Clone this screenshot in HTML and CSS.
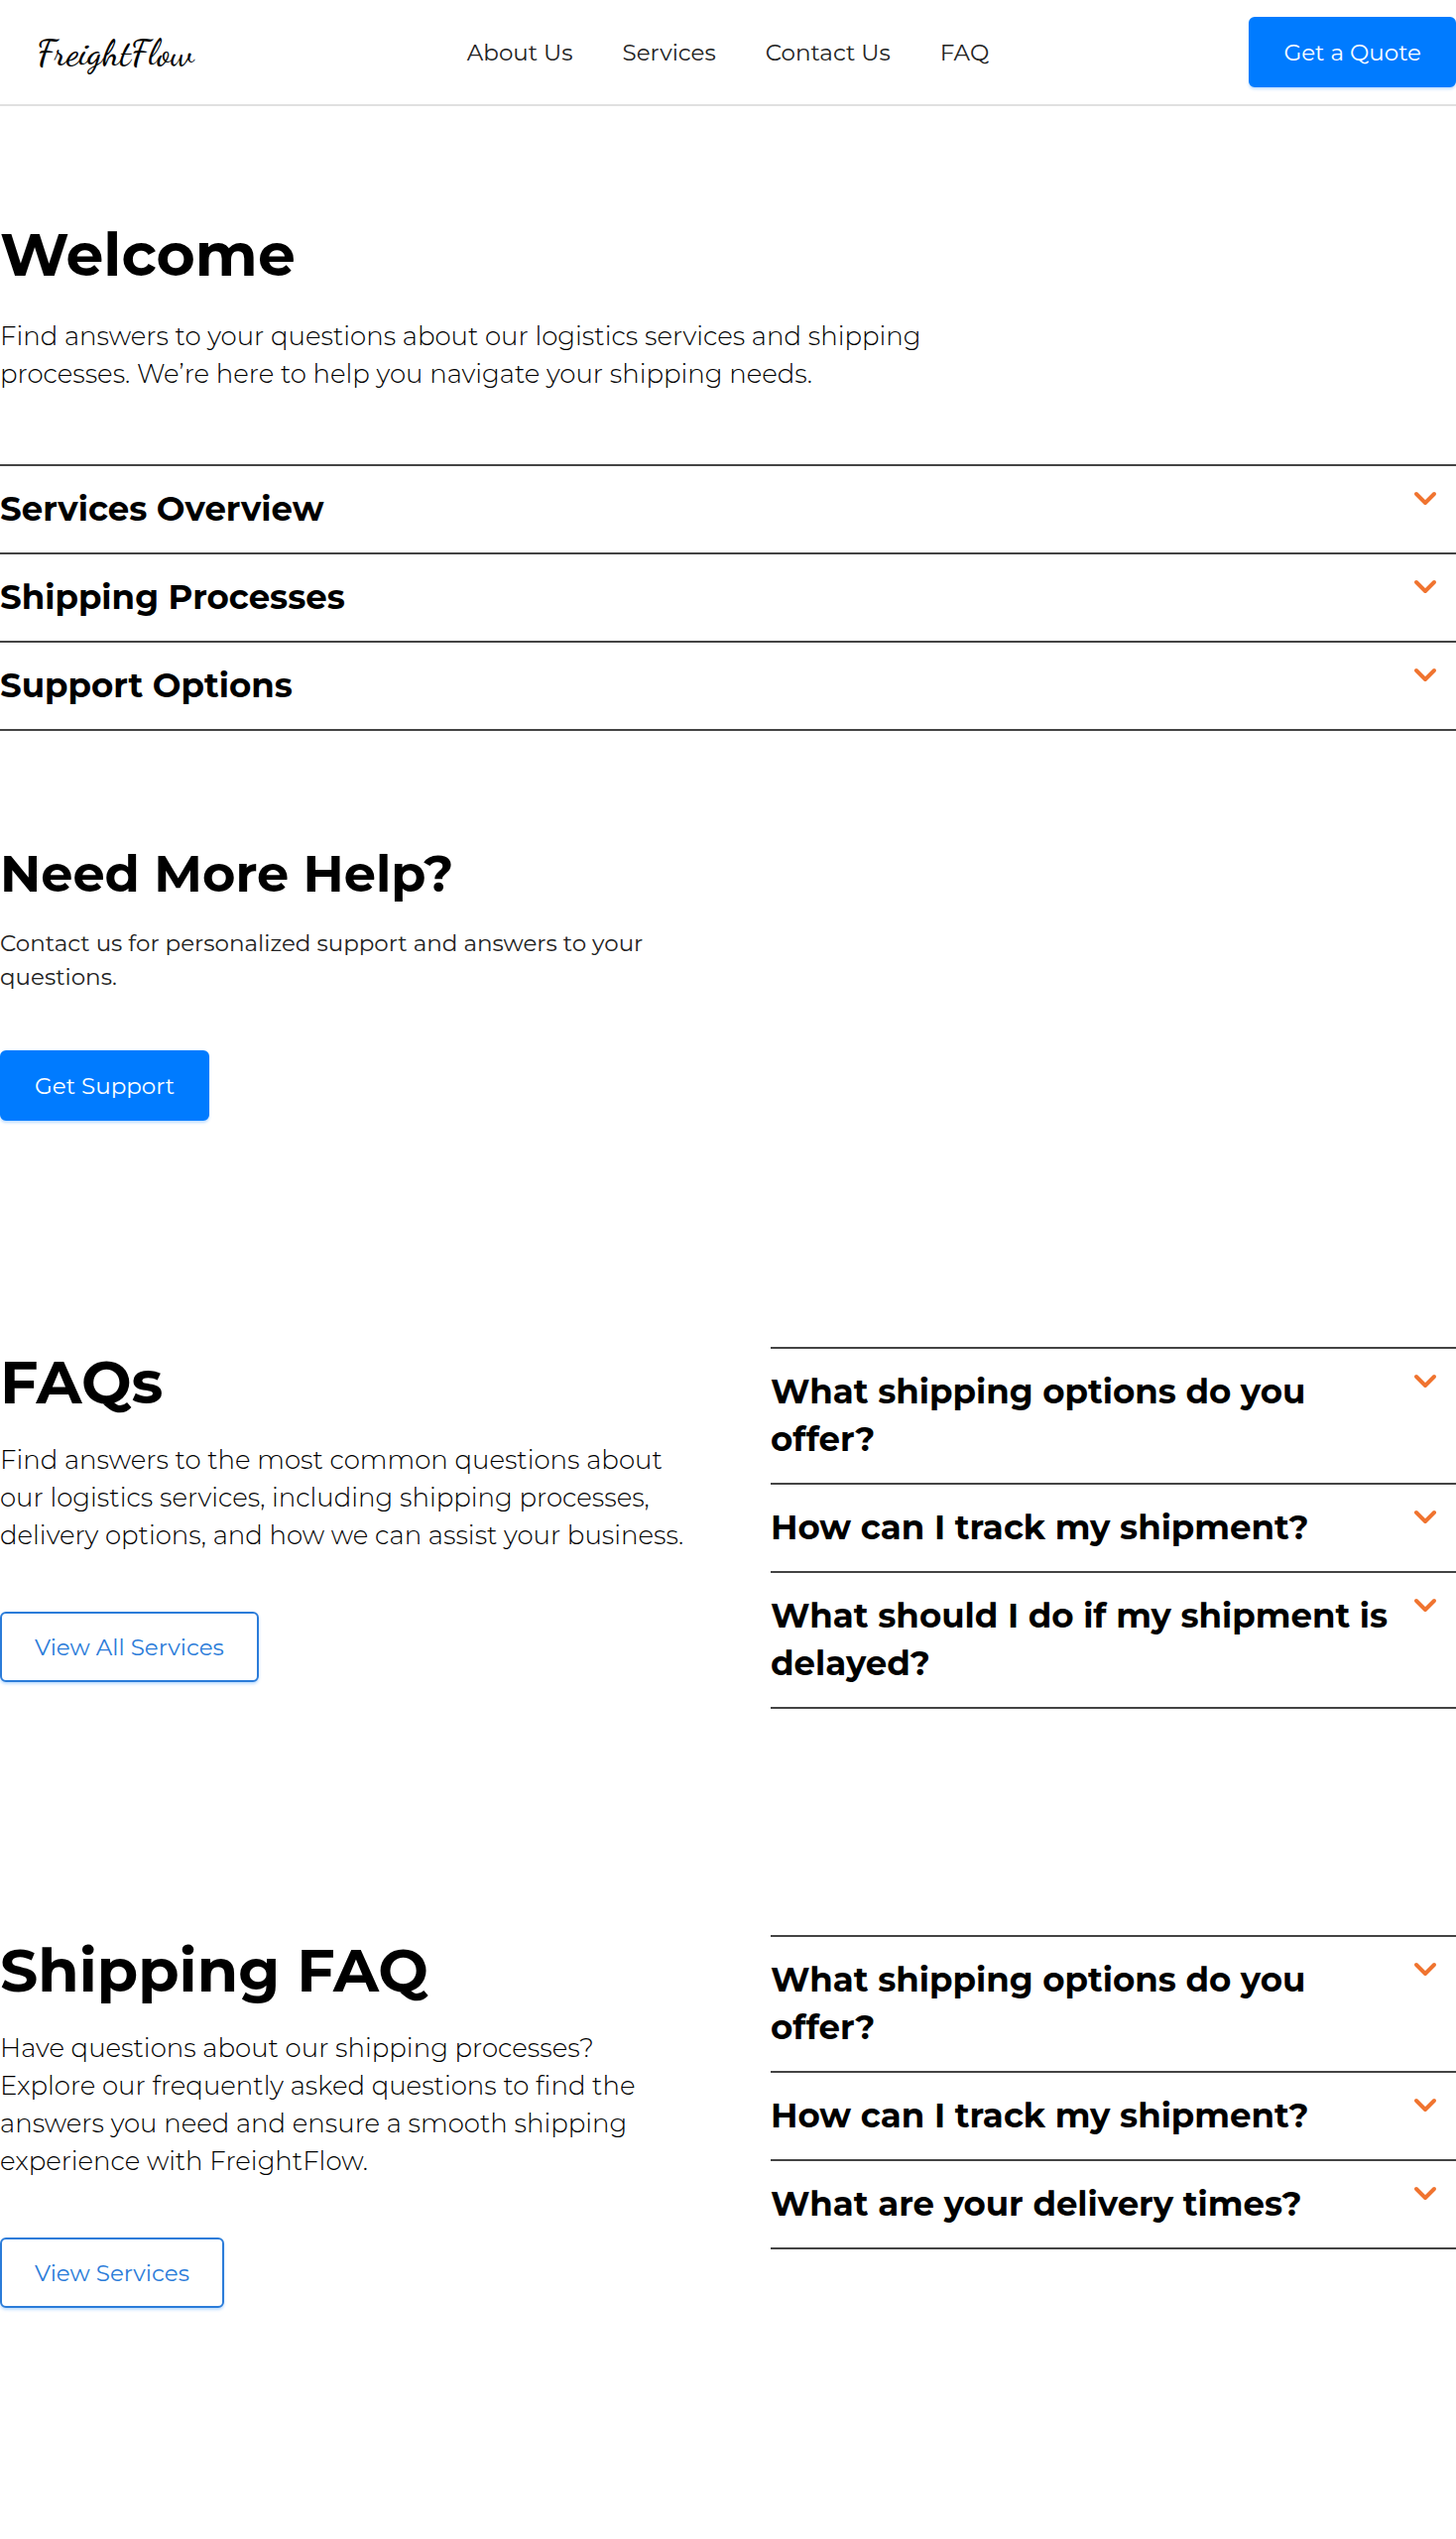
FILE: index.html
```html
<!DOCTYPE html>
<html lang="en">
<head>
    <meta charset="UTF-8">
    <meta name="viewport" content="width=device-width, initial-scale=1.0">
    <title>FreightFlow - FAQ</title>
    <link rel="stylesheet" href="styles.css">
</head>
<body>

<!-- Shared chevron for the accordions -->
<svg class="sprite" width="0" height="0" aria-hidden="true">
    <symbol id="chevron" viewBox="0 0 24 16">
        <path d="M3 3l9 9 9-9" fill="none" stroke="currentColor" stroke-width="4" stroke-linecap="round" stroke-linejoin="round"/>
    </symbol>
</svg>

<header class="navbar">
    <a class="logo" href="#">FreightFlow</a>
    <nav class="nav-links">
        <a href="#about">About Us</a>
        <a href="#services">Services</a>
        <a href="#contact">Contact Us</a>
        <a href="#faq">FAQ</a>
    </nav>
    <div class="nav-action">
        <button class="button" type="button">Get a Quote</button>
    </div>
</header>

<main>
    <section class="section section-first" id="services">
        <h1>Welcome</h1>
        <p class="lead intro">Find answers to your questions about our logistics services and shipping processes. We’re here to help you navigate your shipping needs.</p>
        <div class="accordion">
            <details>
                <summary><span>Services Overview</span><svg class="chevron"><use href="#chevron"/></svg></summary>
            </details>
            <details>
                <summary><span>Shipping Processes</span><svg class="chevron"><use href="#chevron"/></svg></summary>
            </details>
            <details>
                <summary><span>Support Options</span><svg class="chevron"><use href="#chevron"/></svg></summary>
            </details>
        </div>
    </section>

    <section class="section" id="contact">
        <h2 class="help-title">Need More Help?</h2>
        <p class="help-text">Contact us for personalized support and answers to your questions.</p>
        <button class="button" type="button">Get Support</button>
    </section>

    <section class="section columns" id="faq">
        <div class="column">
            <h2>FAQs</h2>
            <p class="lead">Find answers to the most common questions about our logistics services, including shipping processes, delivery options, and how we can assist your business.</p>
            <button class="button button-outline" type="button">View All Services</button>
        </div>
        <div class="column accordion">
            <details>
                <summary><span>What shipping options do you offer?</span><svg class="chevron"><use href="#chevron"/></svg></summary>
            </details>
            <details>
                <summary><span>How can I track my shipment?</span><svg class="chevron"><use href="#chevron"/></svg></summary>
            </details>
            <details>
                <summary><span>What should I do if my shipment is delayed?</span><svg class="chevron"><use href="#chevron"/></svg></summary>
            </details>
        </div>
    </section>

    <section class="section columns">
        <div class="column">
            <h2>Shipping FAQ</h2>
            <p class="lead">Have questions about our shipping processes? Explore our frequently asked questions to find the answers you need and ensure a smooth shipping experience with FreightFlow.</p>
            <button class="button button-outline" type="button">View Services</button>
        </div>
        <div class="column accordion">
            <details>
                <summary><span>What shipping options do you offer?</span><svg class="chevron"><use href="#chevron"/></svg></summary>
            </details>
            <details>
                <summary><span>How can I track my shipment?</span><svg class="chevron"><use href="#chevron"/></svg></summary>
            </details>
            <details>
                <summary><span>What are your delivery times?</span><svg class="chevron"><use href="#chevron"/></svg></summary>
            </details>
        </div>
    </section>
</main>

</body>
</html>
```

FILE: styles.css
```css
* { box-sizing: border-box; }
body {
    margin: 0;
    background-color: #fff;
    color: #000;
    font-family: Montserrat, Inter, sans-serif;
    font-size: 23px;
    font-weight: 400;
    line-height: 34px;
}
h1, h2, p {
    margin: 0;
}
h1, h2 {
    font-size: 60px;
    line-height: 72px;
    font-weight: 700;
}
.sprite {
    position: absolute;
}

/* Header */
.navbar {
    display: grid;
    grid-template-columns: 1fr auto 1fr;
    align-items: center;
    padding: 17px 0;
    border-bottom: 2px solid #e0e0e0;
}
.logo {
    padding-left: 37px;
    color: #000;
    font-family: "Dancing Script", "Liberation Serif", cursive;
    font-size: 37px;
    font-weight: 500;
    text-decoration: none;
}
.nav-links {
    display: flex;
    gap: 50px;
}
.nav-links a {
    color: #222;
    text-decoration: none;
}
.nav-action {
    text-align: right;
}

/* Buttons */
.button {
    height: 71px;
    padding: 0 33px;
    border: 2px solid #007bff;
    border-radius: 6px;
    background-color: #007bff;
    box-shadow: 0 2px 3px rgba(0, 123, 255, 0.25);
    color: #fff;
    font-family: inherit;
    font-size: 23px;
    line-height: 34px;
    vertical-align: top;
    cursor: pointer;
}
.button-outline {
    border-color: #2b7cd9;
    background-color: #fff;
    color: #2b7cd9;
}

/* Sections */
.section {
    padding: 114px 0;
}
.section-first {
    padding-bottom: 0;
}
.lead {
    margin: 23px 0 58px;
    font-size: 26px;
    font-weight: 300;
    line-height: 38px;
}
.intro {
    max-width: 960px;
    margin: 27px 0 72px;
}
.help-title {
    font-size: 51px;
    line-height: 61px;
}
.help-text {
    max-width: 690px;
    margin: 22px 0 57px;
    color: #222;
}
.columns {
    display: flex;
    align-items: flex-start;
    gap: 86px;
}
.column {
    flex: 1;
}

/* Accordion */
.accordion {
    border-top: 2px solid #444;
}
.accordion details {
    border-bottom: 2px solid #444;
}
.accordion summary {
    display: flex;
    align-items: flex-start;
    justify-content: space-between;
    padding: 19px 19px 20px 0;
    font-size: 34px;
    font-weight: 700;
    line-height: 48px;
    list-style: none;
    cursor: pointer;
}
.chevron {
    flex-shrink: 0;
    width: 24px;
    height: 16px;
    margin: 6px 0 0 16px;
    color: #f07430;
}
```
